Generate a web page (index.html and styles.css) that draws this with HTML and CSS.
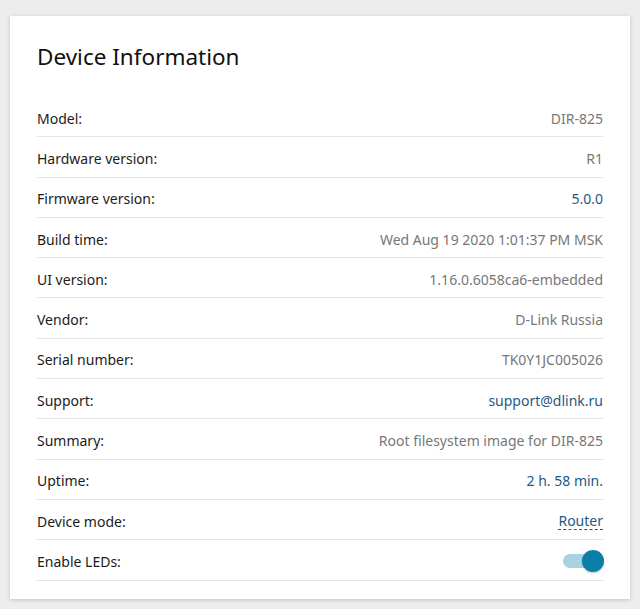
FILE: index.html
```html
<!DOCTYPE html>
<html lang="en">

<head>
    <meta charset="UTF-8">
    <meta name="viewport" content="width=device-width, initial-scale=1.0">
    <title>Device Information</title>

    <link rel="stylesheet" href="styles.css">
</head>

<body>
    <div class="card">
        <h1 class="card-title">Device Information</h1>
        <div class="info-list">
            <div class="info-row">
                <span class="info-label">Model:</span>
                <span class="info-value">DIR-825</span>
            </div>
            <div class="info-row">
                <span class="info-label">Hardware version:</span>
                <span class="info-value">R1</span>
            </div>
            <div class="info-row">
                <span class="info-label">Firmware version:</span>
                <span class="info-value link">5.0.0</span>
            </div>
            <div class="info-row">
                <span class="info-label">Build time:</span>
                <span class="info-value">Wed Aug 19 2020 1:01:37 PM MSK</span>
            </div>
            <div class="info-row">
                <span class="info-label">UI version:</span>
                <span class="info-value">1.16.0.6058ca6-embedded</span>
            </div>
            <div class="info-row">
                <span class="info-label">Vendor:</span>
                <span class="info-value">D-Link Russia</span>
            </div>
            <div class="info-row">
                <span class="info-label">Serial number:</span>
                <span class="info-value">TK0Y1JC005026</span>
            </div>
            <div class="info-row">
                <span class="info-label">Support:</span>
                <span class="info-value link">support@dlink.ru</span>
            </div>
            <div class="info-row">
                <span class="info-label">Summary:</span>
                <span class="info-value">Root filesystem image for DIR-825</span>
            </div>
            <div class="info-row">
                <span class="info-label">Uptime:</span>
                <span class="info-value link">2 h. 58 min.</span>
            </div>
            <div class="info-row">
                <span class="info-label">Device mode:</span>
                <span class="info-value link dashed">Router</span>
            </div>
            <div class="info-row">
                <span class="info-label">Enable LEDs:</span>
                <span class="toggle"><span class="toggle-knob"></span></span>
            </div>
        </div>
    </div>
</body>

</html>
```

FILE: styles.css
```css
body {
    margin: 0;
    background-color: #ededed;
    font-family: "Noto Sans", "Liberation Sans", sans-serif;
    font-size: 14px;
    color: #1c1c1c;
}

.card {
    margin: 16px 10px 11px 10px;
    padding: 25px 27px 18px 27px;
    background-color: #fff;
    box-shadow: 0 1px 4px rgba(0, 0, 0, 0.18);
}

.card-title {
    margin: 0 0 24px 0;
    font-size: 22.5px;
    font-weight: normal;
    line-height: 32px;
    color: #111;
}

.info-row {
    display: flex;
    justify-content: space-between;
    align-items: center;
    height: 36.3px;
    padding-top: 3px;
    border-bottom: 1px solid #e4e4e4;
}

.info-value {
    color: #777;
}

.info-value.link {
    color: #1e5a85;
}

.info-value.dashed {
    border-bottom: 1px dashed #1e5a85;
    line-height: 16px;
}

.toggle {
    position: relative;
    width: 33px;
    height: 14px;
    margin-right: 7px;
    border-radius: 7px;
    background-color: #a9d3e1;
}

.toggle-knob {
    position: absolute;
    top: -4px;
    right: -8px;
    width: 22px;
    height: 22px;
    border-radius: 50%;
    background-color: #0a7fa8;
    box-shadow: 0 1px 2px rgba(0, 0, 0, 0.25);
}
```
